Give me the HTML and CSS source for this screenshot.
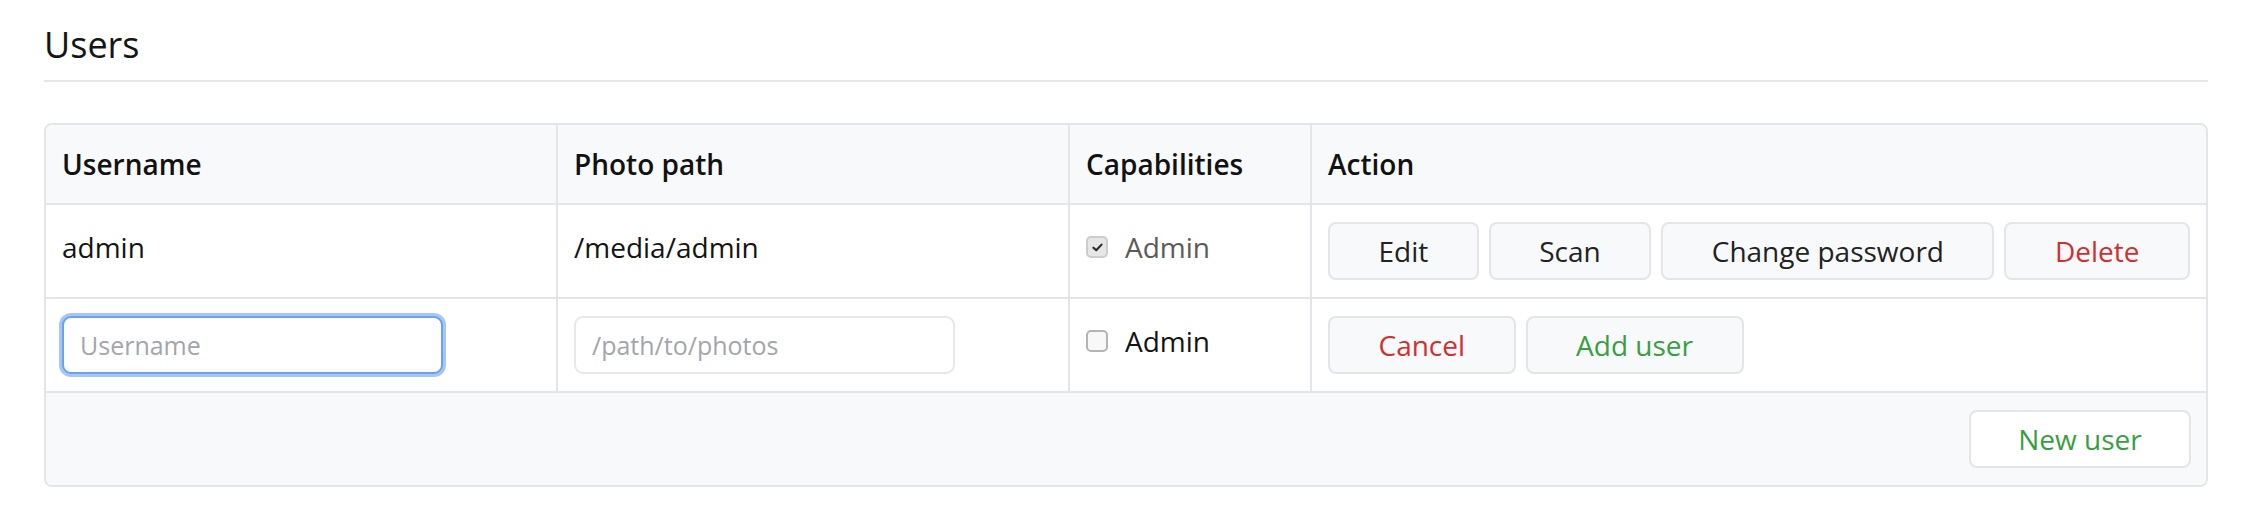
FILE: index.html
```html
<!DOCTYPE html>
<html lang="en">
<head>
<meta charset="utf-8">
<title>Users</title>
<link rel="stylesheet" href="styles.css">
</head>
<body>
<div class="page">
  <h1 class="title">Users</h1>
  <div class="card">
    <table class="users">
      <thead>
        <tr>
          <th class="c1">Username</th>
          <th class="c2">Photo path</th>
          <th class="c3">Capabilities</th>
          <th class="c4">Action</th>
        </tr>
      </thead>
      <tbody>
        <tr>
          <td class="text">admin</td>
          <td class="text">/media/admin</td>
          <td class="text">
            <label class="check disabled">
              <span class="box checked"><svg viewBox="0 0 12 10" width="11" height="9"><path d="M1.5 5.2 L4.6 8 L10.5 1.8" fill="none" stroke="#2b2b2b" stroke-width="2.4" stroke-linecap="round" stroke-linejoin="round"/></svg></span>
              <span>Admin</span>
            </label>
          </td>
          <td>
            <div class="actions">
              <button class="btn">Edit</button>
              <button class="btn">Scan</button>
              <button class="btn">Change password</button>
              <button class="btn danger">Delete</button>
            </div>
          </td>
        </tr>
        <tr>
          <td><input class="field focused" type="text" placeholder="Username"></td>
          <td><input class="field" type="text" placeholder="/path/to/photos"></td>
          <td class="text">
            <label class="check">
              <span class="box"></span>
              <span>Admin</span>
            </label>
          </td>
          <td>
            <div class="actions">
              <button class="btn danger">Cancel</button>
              <button class="btn success">Add user</button>
            </div>
          </td>
        </tr>
      </tbody>
    </table>
    <div class="footer">
      <button class="btn success light">New user</button>
    </div>
  </div>
</div>
</body>
</html>
```

FILE: styles.css
```css
* { box-sizing: border-box; }

body {
  margin: 0;
  background: #ffffff;
  color: #141414;
  font-family: "Open Sans", "Noto Sans", sans-serif;
}

.page {
  padding: 23px 36px 0 44px;
}

.title {
  margin: 0;
  font-size: 36px;
  font-weight: 400;
  line-height: 44px;
  padding-bottom: 13px;
  border-bottom: 2px solid #e6e7e9;
  color: #161616;
}

.card {
  margin-top: 41px;
  border: 2px solid #e3e5e8;
  border-radius: 8px;
  overflow: hidden;
}

.users {
  width: 100%;
  border-collapse: separate;
  border-spacing: 0;
  table-layout: fixed;
}

.users th,
.users td {
  border-bottom: 2px solid #e3e5e8;
  border-right: 2px solid #e3e5e8;
  padding: 17px 16px;
  text-align: left;
  font-size: 28px;
  line-height: 42px;
  vertical-align: middle;
}

.users th:last-child,
.users td:last-child {
  border-right: none;
}

.users th {
  background: #f8f9fa;
  font-weight: 600;
  padding: 18px 16px;
  color: #121212;
}

.c1 { width: 512px; }
.c2 { width: 512px; }
.c3 { width: 242px; }

.users td.text {
  padding-bottom: 25px;
}

.check {
  display: flex;
  align-items: center;
  gap: 17px;
}

.check.disabled {
  color: #5a5a5a;
}

.box {
  width: 22px;
  height: 22px;
  border: 2px solid #b4b4b4;
  border-radius: 5px;
  background: #f8f8f8;
  display: flex;
  align-items: center;
  justify-content: center;
  flex: none;
}

.box.checked {
  background: #e6e6e6;
  border-color: #cdcdcd;
}

.actions {
  display: flex;
  gap: 10px;
}

.btn {
  flex: none;
  white-space: nowrap;
  height: 58px;
  padding: 0 48.5px;
  border: 2px solid #e3e5e8;
  border-radius: 8px;
  background: #f8f9fa;
  color: #222222;
  font-family: "Open Sans", "Noto Sans", sans-serif;
  font-size: 28px;
  line-height: 1;
  cursor: pointer;
}

.btn.danger { color: #d22f2f; }
.btn.success { color: #389f41; }
.btn.light { background: #ffffff; }

.field {
  display: block;
  width: 381px;
  height: 58px;
  padding: 0 16px;
  border: 2px solid #e6e8eb;
  border-radius: 9px;
  background: #ffffff;
  font-family: "Open Sans", "Noto Sans", sans-serif;
  font-size: 25px;
  color: #222;
  outline: none;
}

.field::placeholder {
  color: #a2a6ac;
}

.field.focused {
  border-color: #6aa1f0;
  box-shadow: 0 0 0 3px #a6c6f6;
}

.footer {
  background: #f8f9fa;
  padding: 17px 15px;
  display: flex;
  justify-content: flex-end;
}

.footer .btn {
  width: 222px;
  padding: 0;
}
```
